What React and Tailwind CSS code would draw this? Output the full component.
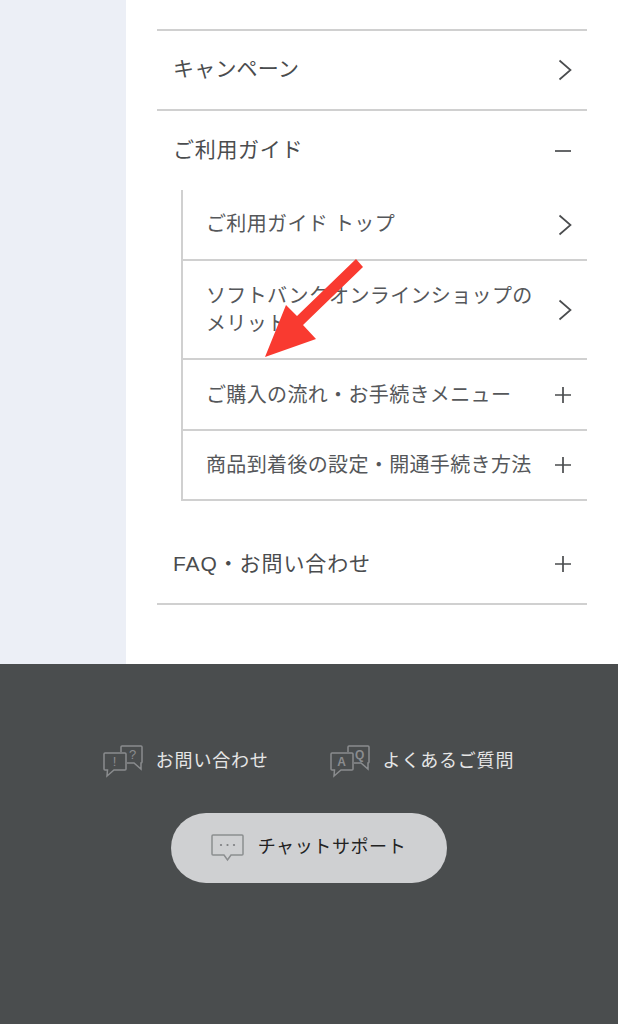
const font = { fontFamily: '"Liberation Sans", "Noto Sans CJK JP", sans-serif' };

function Chevron() {
  return (
    <svg width="16" height="22" viewBox="0 0 16 22" fill="none" stroke="#4a4c4e" strokeWidth="1.7" className="shrink-0 mr-[-1px]">
      <path d="M2.5 1.5 L13.5 11 L2.5 20.5" />
    </svg>
  );
}
function Plus() {
  return (
    <svg width="18" height="18" viewBox="0 0 18 18" fill="none" stroke="#4a4c4e" strokeWidth="1.7" className="shrink-0">
      <path d="M1 9 H17 M9 1 V17" />
    </svg>
  );
}
function Minus() {
  return (
    <svg width="18" height="18" viewBox="0 0 18 18" fill="none" stroke="#4a4c4e" strokeWidth="1.7" className="shrink-0">
      <path d="M1 9 H17" />
    </svg>
  );
}

function TopRow({ label, icon, border = true, cls = "", textCls = "" }) {
  return (
    <div className={`flex items-center justify-between pl-[16px] pr-[15px] text-[21px] text-[#4a4c4e] ${border ? "border-b-2 border-[#d0d0d0]" : ""} ${cls}`}>
      <span className={`whitespace-nowrap ${textCls}`}>{label}</span>
      {icon}
    </div>
  );
}

function SubRow({ children, icon, cls = "", textCls = "" }) {
  return (
    <div className={`flex items-center justify-between pl-[23px] pr-[15px] text-[20px] leading-[28px] tracking-[0.35px] text-[#55575a] border-b-2 border-[#d0d0d0] ${cls}`}>
      <span className={textCls}>{children}</span>
      {icon}
    </div>
  );
}

function BubbleQ() {
  return (
    <svg width="42" height="33" viewBox="0 0 42 33" fill="none" stroke="#8a8c8e" strokeWidth="1.5" className="shrink-0">
      <path d="M18 7 V2 a1 1 0 0 1 1 -1 H38 a1 1 0 0 1 1 1 V17 a1 1 0 0 1 -1 1 H38 L38 24 L31 18 H24" />
      <path d="M2 8 H22 a1 1 0 0 1 1 1 V24 a1 1 0 0 1 -1 1 H11 L4 31 L4.5 25 H2 a1 1 0 0 1 -1 -1 V9 a1 1 0 0 1 1 -1 Z" />
      <text x="12" y="21" fontSize="13" fill="#8a8c8e" stroke="none" textAnchor="middle" fontFamily="Liberation Sans">!</text>
      <text x="30" y="14" fontSize="13" fill="#8a8c8e" stroke="none" textAnchor="middle" fontFamily="Liberation Sans">?</text>
    </svg>
  );
}
function BubbleA() {
  return (
    <svg width="42" height="33" viewBox="0 0 42 33" fill="none" stroke="#8a8c8e" strokeWidth="1.5" className="shrink-0">
      <path d="M18 7 V2 a1 1 0 0 1 1 -1 H38 a1 1 0 0 1 1 1 V17 a1 1 0 0 1 -1 1 H38 L38 24 L31 18 H24" />
      <path d="M2 8 H22 a1 1 0 0 1 1 1 V24 a1 1 0 0 1 -1 1 H11 L4 31 L4.5 25 H2 a1 1 0 0 1 -1 -1 V9 a1 1 0 0 1 1 -1 Z" />
      <text x="12" y="21" fontSize="12" fill="#8a8c8e" stroke="none" textAnchor="middle" fontFamily="Liberation Sans" fontWeight="700">A</text>
      <text x="30" y="13.5" fontSize="12" fill="#8a8c8e" stroke="none" textAnchor="middle" fontFamily="Liberation Sans" fontWeight="700">Q</text>
    </svg>
  );
}
function BubbleChat() {
  return (
    <svg width="33" height="28" viewBox="0 0 33 28" fill="none" stroke="#8c8e90" strokeWidth="1.5" className="shrink-0">
      <path d="M2 1 H31 a1 1 0 0 1 1 1 V20 a1 1 0 0 1 -1 1 H20 L16.5 26 L13 21 H2 a1 1 0 0 1 -1 -1 V2 a1 1 0 0 1 1 -1 Z" />
      <circle cx="10" cy="11" r="1.1" fill="#7c7e80" stroke="none" />
      <circle cx="16.5" cy="11" r="1.1" fill="#7c7e80" stroke="none" />
      <circle cx="23" cy="11" r="1.1" fill="#7c7e80" stroke="none" />
    </svg>
  );
}

export default function App() {
  return (
    <div className="w-[618px] h-[1024px] overflow-hidden bg-white flex flex-col relative" style={font}>
      <div className="flex h-[664px] shrink-0">
        <div className="w-[126px] bg-[#eceff6] shrink-0" />
        <div className="flex-1 pl-[31px] pr-[31px] pt-[29px]">
          <div className="border-t-2 border-[#d0d0d0]">
            <TopRow label="キャンペーン" icon={<Chevron />} cls="h-[80px]" textCls="mb-[2px] tracking-[0.2px]" />
            <TopRow label="ご利用ガイド" icon={<Minus />} border={false} cls="h-[79px]" textCls="mb-[2px] tracking-[0.7px]" />
            <div className="ml-[24px] border-l-2 border-[#d0d0d0]">
              <SubRow icon={<Chevron />} cls="h-[71px]" textCls="mb-[2px]">ご利用ガイド トップ</SubRow>
              <SubRow icon={<Chevron />} cls="h-[99px]">
                <span className="block w-[332px]">ソフトバンクオンラインショップのメリット</span>
              </SubRow>
              <SubRow icon={<Plus />} cls="h-[71px]" textCls="mt-[1px]">ご購入の流れ・お手続きメニュー</SubRow>
              <SubRow icon={<Plus />} cls="h-[70px]">商品到着後の設定・開通手続き方法</SubRow>
            </div>
            <TopRow label="FAQ・お問い合わせ" icon={<Plus />} cls="h-[104px] pt-[24px]" textCls="tracking-[0.9px]" />
          </div>
        </div>
      </div>

      <div className="flex-1 bg-[#4a4d4e] flex flex-col items-center pt-[80px]">
        <div className="flex items-center ml-[-1px] h-[34px]">
          <div className="flex items-center gap-[11px] text-[18px] tracking-[0.8px] text-[#e6e6e6]">
            <BubbleQ />
            <span>お問い合わせ</span>
          </div>
          <div className="flex items-center gap-[11px] ml-[61px] text-[18px] tracking-[0.8px] text-[#e6e6e6]">
            <BubbleA />
            <span>よくあるご質問</span>
          </div>
        </div>
        <div className="mt-[35px] w-[276px] h-[70px] mr-[1px] rounded-full bg-[#cfd0d2] flex items-center justify-center gap-[14px] text-[18px] tracking-[0.6px] text-[#222]">
          <BubbleChat />
          <span className="mb-[1px]">チャットサポート</span>
        </div>
      </div>

      <svg className="absolute left-[260px] top-[255px]" width="106" height="106" viewBox="0 0 106 106">
        <path d="M96 4 L103 12 L43 70 L56 84 L5 102 L26 50 L37 61 Z" fill="#f93a30" />
      </svg>
    </div>
  );
}
